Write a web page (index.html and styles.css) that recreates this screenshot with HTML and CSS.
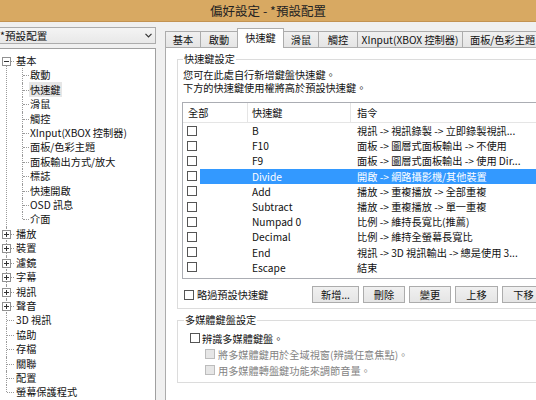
FILE: index.html
```html
<!DOCTYPE html>
<html lang="zh-Hant">
<head>
    <meta charset="UTF-8">
    <title>偏好設定 - *預設配置</title>
    <link rel="stylesheet" href="styles.css">
</head>
<body>
    <div class="titlebar">偏好設定 - *預設配置</div>

    <div class="main">
        <div class="side">
            <div class="combo">
                <span>*預設配置</span>
                <svg width="7" height="5" viewBox="0 0 7 5"><path d="M0.5 0.8 L3.5 3.8 L6.5 0.8" fill="none" stroke="#333" stroke-width="1.2"/></svg>
            </div>
            <div class="treebox">
                <ul class="tree">
                    <li class="first"><span class="exp minus"></span>基本
                        <ul>
                            <li>啟動</li>
                            <li><span class="sel">快速鍵</span></li>
                            <li>滑鼠</li>
                            <li>觸控</li>
                            <li>XInput(XBOX 控制器)</li>
                            <li>面板/色彩主題</li>
                            <li>面板輸出方式/放大</li>
                            <li>標誌</li>
                            <li>快速開啟</li>
                            <li>OSD 訊息</li>
                            <li class="last">介面</li>
                        </ul>
                    </li>
                    <li><span class="exp plus"></span>播放</li>
                    <li><span class="exp plus"></span>裝置</li>
                    <li><span class="exp plus"></span>濾鏡</li>
                    <li><span class="exp plus"></span>字幕</li>
                    <li><span class="exp plus"></span>視訊</li>
                    <li><span class="exp plus"></span>聲音</li>
                    <li>3D 視訊</li>
                    <li>協助</li>
                    <li>存檔</li>
                    <li>關聯</li>
                    <li>配置</li>
                    <li class="last">螢幕保護程式</li>
                </ul>
            </div>
        </div>

        <div class="right">
            <div class="tabs">
                <div class="tab w1">基本</div>
                <div class="tab w2">啟動</div>
                <div class="tab w3 on">快速鍵</div>
                <div class="tab w4">滑鼠</div>
                <div class="tab w5">觸控</div>
                <div class="tab w6">XInput(XBOX 控制器)</div>
                <div class="tab w7">面板/色彩主題</div>
            </div>
            <div class="panel">
                <fieldset class="group">
                    <legend>快速鍵設定</legend>
                    <p class="desc">您可在此處自行新增鍵盤快速鍵。<br>下方的快速鍵使用權將高於預設快速鍵。</p>
                    <div class="list">
                        <div class="lhead">
                            <div class="c1">全部</div>
                            <div class="c2">快速鍵</div>
                            <div class="c3">指令</div>
                        </div>
                        <div class="row"><span class="cb"></span><div class="cell"><span class="key">B</span><span class="cmd">視訊 -&gt; 視訊錄製 -&gt; 立即錄製視訊...</span></div></div>
                        <div class="row"><span class="cb"></span><div class="cell"><span class="key">F10</span><span class="cmd">面板 -&gt; 圖層式面板輸出 -&gt; 不使用</span></div></div>
                        <div class="row"><span class="cb"></span><div class="cell"><span class="key">F9</span><span class="cmd">面板 -&gt; 圖層式面板輸出 -&gt; 使用 Dir...</span></div></div>
                        <div class="row sel"><span class="cb"></span><div class="cell"><span class="key">Divide</span><span class="cmd">開啟 -&gt; 網路攝影機/其他裝置</span></div></div>
                        <div class="row"><span class="cb"></span><div class="cell"><span class="key">Add</span><span class="cmd">播放 -&gt; 重複播放 -&gt; 全部重複</span></div></div>
                        <div class="row"><span class="cb"></span><div class="cell"><span class="key">Subtract</span><span class="cmd">播放 -&gt; 重複播放 -&gt; 單一重複</span></div></div>
                        <div class="row"><span class="cb"></span><div class="cell"><span class="key">Numpad 0</span><span class="cmd">比例 -&gt; 維持長寬比(推薦)</span></div></div>
                        <div class="row"><span class="cb"></span><div class="cell"><span class="key">Decimal</span><span class="cmd">比例 -&gt; 維持全螢幕長寬比</span></div></div>
                        <div class="row"><span class="cb"></span><div class="cell"><span class="key">End</span><span class="cmd">視訊 -&gt; 3D 視訊輸出 -&gt; 總是使用 3...</span></div></div>
                        <div class="row"><span class="cb"></span><div class="cell"><span class="key">Escape</span><span class="cmd">結束</span></div></div>
                    </div>
                    <div class="foot">
                        <label class="skip"><span class="cb"></span>略過預設快速鍵</label>
                        <div class="btn b1">新增...</div>
                        <div class="btn b2">刪除</div>
                        <div class="btn b3">變更</div>
                        <div class="btn b4">上移</div>
                        <div class="btn b5">下移</div>
                    </div>
                </fieldset>

                <fieldset class="group group2">
                    <legend>多媒體鍵盤設定</legend>
                    <div class="opt"><span class="cb"></span>辨識多媒體鍵盤。</div>
                    <div class="opt sub off"><span class="cb"></span>將多媒體鍵用於全域視窗(辨識任意焦點)。</div>
                    <div class="opt sub off"><span class="cb"></span>用多媒體轉盤鍵功能來調節音量。</div>
                </fieldset>
            </div>
        </div>
    </div>
</body>
</html>
```

FILE: styles.css
```css
body {
    margin: 0;
    width: 536px;
    height: 400px;
    overflow: hidden;
    background: #f0f0f0;
    font-family: "Noto Sans CJK TC", "Noto Sans", sans-serif;
    font-size: 10.2px;
    color: #111;
}

.titlebar {
    height: 21px;
    line-height: 21px;
    border-bottom: 1px solid #c39352;
    background: #d8a962;
    text-align: center;
    font-size: 12.5px;
    color: #222;
}

.main {
    display: flex;
}

.side {
    width: 156px;
    flex: none;
    margin-right: 9px;
    padding-top: 5px;
}

.combo {
    width: 159px;
    height: 17px;
    margin-left: -3px;
    box-sizing: border-box;
    border: 1px solid #acacac;
    background: linear-gradient(#f4f4f4, #e8e8e8);
    display: flex;
    align-items: center;
    justify-content: space-between;
    padding: 0 3px 0 2px;
    line-height: 15px;
    font-size: 10.6px;
}

.treebox {
    width: 157px;
    height: 360px;
    margin: 4px 0 0 -1px;
    box-sizing: border-box;
    border: 1px solid #a0a0a0;
    background: #fff;
    padding-top: 5px;
}

.tree,
.tree ul {
    list-style: none;
    margin: 0;
    padding: 0;
}

.tree li {
    position: relative;
    padding-left: 16px;
    line-height: 14.4px;
    white-space: nowrap;
}

.tree li::before {
    content: '';
    position: absolute;
    left: 6px;
    top: 0;
    bottom: 0;
    border-left: 1px dotted #9a9a9a;
}

.tree li::after {
    content: '';
    position: absolute;
    left: 7px;
    top: 7px;
    width: 7px;
    border-top: 1px dotted #9a9a9a;
}

.tree li.first::before {
    top: 7px;
}

.tree li.last::before {
    bottom: auto;
    height: 7px;
}

.tree ul li {
    padding-left: 14px;
}

.tree ul li::after {
    width: 6px;
}

.tree .sel {
    background: #e6e6e6;
    margin-left: -1px;
    padding: 0 1px;
}

.exp {
    position: absolute;
    left: 2px;
    top: 3px;
    width: 9px;
    height: 9px;
    box-sizing: border-box;
    border: 1px solid #919191;
    z-index: 1;
}

.exp.minus {
    background: linear-gradient(#333, #333) center / 5px 1px no-repeat, #fff;
}

.exp.plus {
    background: linear-gradient(#333, #333) center / 5px 1px no-repeat,
                linear-gradient(#333, #333) center / 1px 5px no-repeat, #fff;
}

.right {
    width: 400px;
    flex: none;
    padding-top: 4px;
}

.tabs {
    display: flex;
    align-items: flex-end;
    height: 21px;
}

.tab {
    height: 16px;
    box-sizing: border-box;
    border: 1px solid #acacac;
    border-bottom: none;
    margin-right: -1px;
    background: linear-gradient(#f0f0f0, #e5e5e5);
    text-align: center;
    line-height: 15px;
    white-space: nowrap;
    overflow: hidden;
}

.tab.on {
    height: 20px;
    line-height: 17px;
    background: #fff;
    margin-bottom: -1px;
    position: relative;
    z-index: 1;
}

.w1 { width: 36px; }
.w2 { width: 38px; }
.w3 { width: 47px; }
.w4 { width: 36px; }
.w5 { width: 40px; }
.w6 { width: 106px; }
.w7 { width: 90px; text-align: left; padding-left: 7px; }

.panel {
    height: 360px;
    border: 1px solid #acacac;
    background: #fff;
    padding-left: 11px;
}

.group {
    width: 380px;
    margin: 4px 0 0 0;
    padding: 0 0 5px 4px;
    border: 1px solid #dcdcdc;
    min-width: 0;
}

.group legend {
    padding: 0 1px;
    margin-left: 1px;
    line-height: 14px;
}

.desc {
    margin: 2px 0 0 1px;
    line-height: 13px;
}

.list {
    margin-top: 8px;
    height: 177px;
    box-sizing: border-box;
    border: 1px solid #abadb3;
    background: #fff;
}

.lhead {
    display: flex;
    height: 20px;
    box-sizing: border-box;
    border-bottom: 1px solid #e5e5e5;
    line-height: 19px;
}

.lhead div {
    box-sizing: border-box;
}

.lhead .c1 {
    width: 64px;
    padding-left: 5px;
}

.lhead .c2 {
    width: 103px;
    border-left: 1px solid #e5e5e5;
    padding-left: 4px;
}

.lhead .c3 {
    flex: 1;
    border-left: 1px solid #e5e5e5;
    padding-left: 6px;
}

.row {
    display: flex;
    align-items: center;
    height: 15.2px;
    padding-left: 4px;
}

.cb {
    width: 10px;
    height: 10px;
    box-sizing: border-box;
    border: 1px solid #555;
    background: #fff;
    flex: none;
}

.row .cell {
    display: flex;
    flex: 1;
    height: 100%;
    margin-left: 3px;
    line-height: 15.2px;
    white-space: nowrap;
}

.key {
    width: 150px;
    flex: none;
    box-sizing: border-box;
    padding-left: 52px;
}

.cmd {
    padding-left: 7px;
}

.row.sel .cell {
    background: #3399ff;
    color: #fff;
}

.foot {
    display: flex;
    align-items: center;
    margin-top: 7px;
}

.skip {
    width: 128px;
    margin-left: 2px;
    display: flex;
    align-items: center;
    gap: 3px;
    flex: none;
}

.btn {
    height: 17px;
    box-sizing: border-box;
    border: 1px solid #acacac;
    background: linear-gradient(#f0f0f0, #e5e5e5);
    margin-right: 4px;
    text-align: center;
    line-height: 15px;
    flex: none;
}

.b1 { width: 47px; }
.b2 { width: 42px; }
.b3 { width: 42px; }
.b4 { width: 43px; }
.b5 { width: 43px; }

.group2 {
    padding: 0 0 4px 4px;
}

.group2 legend {
    margin-left: 2px;
}

.opt {
    display: flex;
    align-items: center;
    gap: 2px;
    height: 16px;
    padding-left: 8px;
}

.group2 legend + .opt {
    margin-top: 3px;
}

.opt.sub {
    padding-left: 23px;
    gap: 3px;
}

.opt.off {
    color: #838383;
}

.opt.off .cb {
    background: #e6e6e6;
    border-color: #bcbcbc;
}
```
